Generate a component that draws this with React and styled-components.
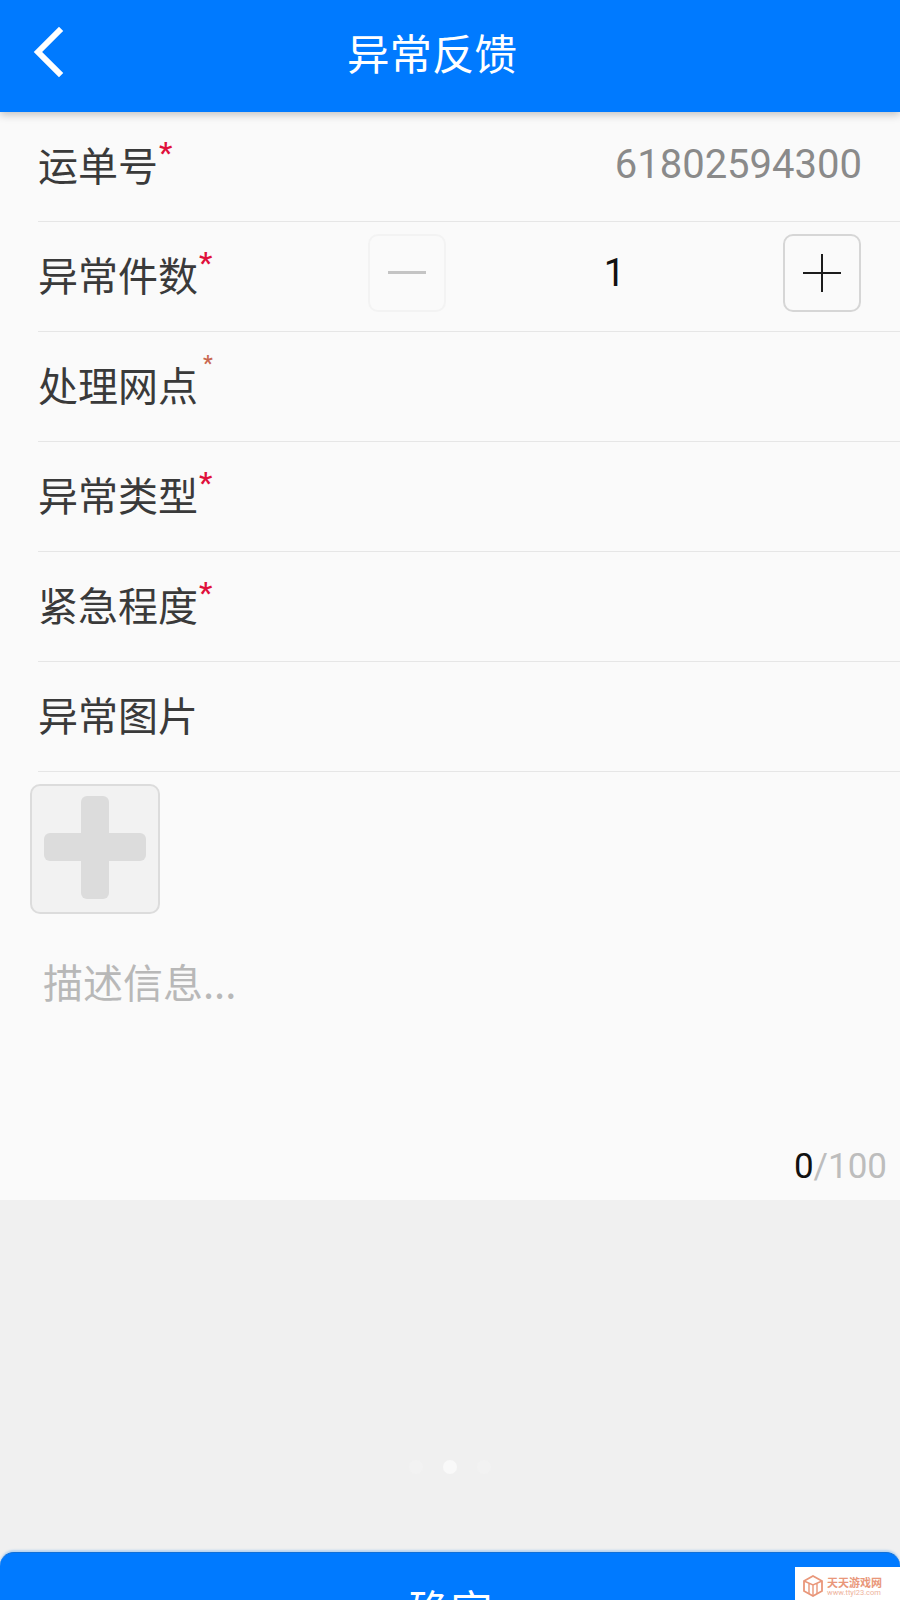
import React from "react";
import styled, { createGlobalStyle } from "styled-components";

const Global = createGlobalStyle`
  html, body { margin: 0; padding: 0; background: #f0f0f0; }
  * { box-sizing: border-box; }
`;
const CJK = `"Noto Sans CJK SC", "Noto Sans", sans-serif`;
const LATIN = `Roboto, "Noto Sans CJK SC", sans-serif`;

const Screen = styled.div`
  position: relative; width: 900px; height: 1600px; overflow: hidden;
  display: flex; flex-direction: column; background: #f0f0f0; font-family: ${CJK};
`;
const Header = styled.header`
  position: relative; z-index: 1; flex: none; height: 112px; background: #007aff;
  box-shadow: 0 3px 8px rgba(0,0,0,.22);
  display: flex; align-items: center; padding: 0 0 8px 30px;
`;
const Back = styled.svg`width: 36px; height: 52px; flex: none;`;
const Title = styled.h1`
  margin: 0 0 0 281px; font-size: 42.5px; font-weight: 400; color: #fff; line-height: 1; white-space: nowrap;
`;
const Panel = styled.main`
  flex: none; height: 1088px; background: #fafafa; display: flex; flex-direction: column;
`;
const Row = styled.div`
  flex: none; height: 110px; margin-left: 38px; padding-right: 38px;
  border-bottom: 1px solid #e6e6e6; display: flex; align-items: center; justify-content: space-between;
`;
const Label = styled.span`
  font-size: 40px; line-height: 1; color: #3a3a3a; white-space: nowrap; margin-top: -6px;
`;
const Star = styled.sup`
  font-family: ${LATIN}; line-height: 0; vertical-align: baseline; display: inline-block; font-weight: 500;
  transform: translate(${p => (p.$faint ? 5 : 1)}px, ${p => (p.$faint ? -30 : -18)}px);
  font-size: ${p => (p.$faint ? 22 : 30)}px; color: ${p => (p.$faint ? "#c9674f" : "#e0103c")};
`;
const Value = styled.span`
  font-family: ${LATIN}; font-size: 40px; line-height: 1; color: #8a8a8a; margin-top: -4px;
`;
const Stepper = styled.div`
  display: grid; grid-template-columns: 78px 1fr 78px; width: 493px; align-items: center; margin: -8px 1px 0 0;
`;
const StepButton = styled.div`
  width: 78px; height: 78px; border-radius: 10px; display: flex; align-items: center; justify-content: center;
  border: 2px solid ${p => (p.$off ? "#f3f3f3" : "#d6d6d6")};
`;
const Count = styled.span`
  font-family: ${LATIN}; font-size: 38px; color: #111; text-align: center; line-height: 1;
`;
const AddTile = styled.div`
  flex: none; width: 130px; height: 130px; margin: 12px 0 0 30px; border: 2px solid #dcdcdc;
  border-radius: 10px; background: #f2f2f2; display: flex; align-items: center; justify-content: center;
  padding-bottom: 4px;
`;
const Placeholder = styled.div`
  margin: 45px 0 0 43px; font-size: 40px; line-height: 44px; color: #b8b8b8;
`;
const Counter = styled.div`
  margin-top: auto; padding: 0 13px 13px 0; text-align: right; font-family: ${LATIN};
  font-size: 35px; line-height: 41px; color: #bdbdbd;
`;
const Typed = styled.span`color: #111;`;
const Rest = styled.section`
  flex: none; height: 352px; display: flex; align-items: flex-end; justify-content: center; padding-bottom: 78px;
`;
const Dots = styled.div`display: flex; align-items: center; gap: 20px;`;
const Dot = styled.i`
  display: block; width: 14px; height: 14px; border-radius: 50%;
  background: ${p => (p.$on ? "#f9f9f9" : "#f2f2f2")};
`;
const Confirm = styled.button`
  flex: none; width: 900px; height: 110px; border: 0; border-top: 1px solid #1070d8;
  border-radius: 14px 14px 0 0; background: #007aff; color: #fff; font-family: ${CJK};
  font-size: 42px; line-height: 1; padding: 0 0 0 1px; box-shadow: 0 -2px 2px rgba(120,180,240,.45);
`;
const Watermark = styled.div`
  position: absolute; right: 0; bottom: 0; width: 105px; height: 33px; background: #fff;
  display: flex; align-items: center; gap: 4px; padding: 5px 0 0 8px;
`;
const MarkText = styled.div`display: flex; flex-direction: column; color: #e9977a;`;
const MarkName = styled.span`font-size: 11px; line-height: 12px; font-weight: 700; white-space: nowrap;`;
const MarkUrl = styled.span`font-family: ${LATIN}; font-size: 7.5px; line-height: 9px; white-space: nowrap; color: #eeb29c;`;

const fields = [
  { name: "处理网点", faint: true },
  { name: "异常类型" },
  { name: "紧急程度" },
];

export default function App() {
  return (
    <Screen>
      <Global />
      <Header>
        <Back viewBox="0 0 36 52" fill="none" stroke="#fff" strokeWidth="6" strokeLinecap="square">
          <path d="M29 5 L8 26 L29 47" />
        </Back>
        <Title>异常反馈</Title>
      </Header>
      <Panel>
        <Row>
          <Label>运单号<Star>*</Star></Label>
          <Value>61802594300</Value>
        </Row>
        <Row>
          <Label>异常件数<Star>*</Star></Label>
          <Stepper>
            <StepButton $off>
              <svg width="38" height="4" viewBox="0 0 38 4"><rect width="38" height="3" fill="#c4c4c4" /></svg>
            </StepButton>
            <Count>1</Count>
            <StepButton>
              <svg width="38" height="38" viewBox="0 0 38 38" fill="#1c1c1c">
                <rect x="0" y="18" width="38" height="2" />
                <rect x="18" y="0" width="2" height="38" />
              </svg>
            </StepButton>
          </Stepper>
        </Row>
        {fields.map(f => (
          <Row key={f.name}>
            <Label>{f.name}<Star $faint={f.faint}>*</Star></Label>
          </Row>
        ))}
        <Row><Label>异常图片</Label></Row>
        <AddTile>
          <svg width="102" height="103" viewBox="0 0 102 103" fill="#dcdcdc">
            <rect x="0" y="37" width="102" height="28" rx="6" />
            <rect x="37" y="0" width="28" height="103" rx="6" />
          </svg>
        </AddTile>
        <Placeholder>描述信息...</Placeholder>
        <Counter><Typed>0</Typed>/100</Counter>
      </Panel>
      <Rest>
        <Dots>
          <Dot />
          <Dot $on />
          <Dot />
        </Dots>
      </Rest>
      <Confirm>确定</Confirm>
      <Watermark>
        <svg width="20" height="22" viewBox="0 0 20 22" fill="none" stroke="#e9977a" strokeWidth="1.8">
          <path d="M10 1 L19 6 V16 L10 21 L1 16 V6 Z" />
          <path d="M1 6 L10 10 L19 6 M6 8 V19 M10 10 V21 M14 8 V19" strokeWidth="1.4" />
        </svg>
        <MarkText>
          <MarkName>天天游戏网</MarkName>
          <MarkUrl>www.ttyl23.com</MarkUrl>
        </MarkText>
      </Watermark>
    </Screen>
  );
}
